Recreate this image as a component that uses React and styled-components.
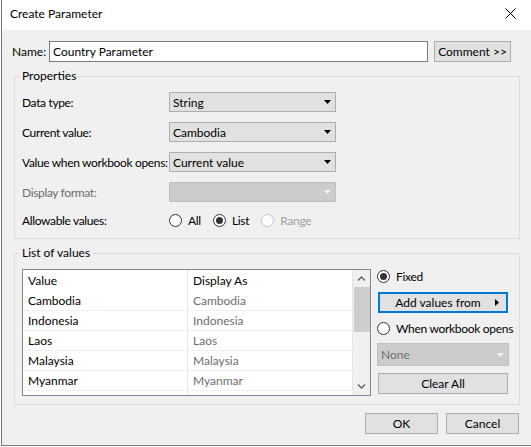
import React from "react";
import styled, { createGlobalStyle } from "styled-components";

const Global = createGlobalStyle`
  html, body {
    margin: 0;
    padding: 0;
    background: #ffffff;
    overflow: hidden;
  }
  body {
    font-family: "Segoe UI", Lato, "Liberation Sans", Arial, sans-serif;
    font-size: 12px;
    color: #000000;
    white-space: nowrap;
  }
`;

const Window = styled.div`
  margin-left: 1px;
  width: 530px;
  height: 446px;
  box-sizing: border-box;
  border-left: 1px solid #7a7a7a;
  border-bottom: 1px solid #7a7a7a;
  display: flex;
  flex-direction: column;
  overflow: hidden;
`;

const TitleBar = styled.div`
  height: 30px;
  flex: none;
  background: #ffffff;
  display: flex;
  align-items: center;
  justify-content: space-between;
  padding: 0 15px 3px 8px;
  box-sizing: border-box;
`;

const Body = styled.div`
  flex: 1;
  background: #f0f0f0;
  padding: 11px 0 0 10px;
  display: flex;
  flex-direction: column;
`;

const NameRow = styled.div`
  display: flex;
  align-items: center;
  height: 21px;
`;

const NameLabel = styled.span`
  width: 37px;
`;

const TextInput = styled.div`
  width: 379px;
  height: 21px;
  box-sizing: border-box;
  border: 1px solid #7a7a7a;
  background: #ffffff;
  display: flex;
  align-items: center;
  padding-left: 3px;
`;

const Button = styled.div`
  width: ${p => p.$w || 73}px;
  height: 21px;
  flex: none;
  box-sizing: border-box;
  border: ${p => (p.$focus ? "2px solid #0078d7" : "1px solid #adadad")};
  background: #e1e1e1;
  display: flex;
  align-items: center;
  justify-content: center;
  position: relative;
  margin-left: ${p => p.$ml || 0}px;
`;

const ButtonArrow = styled.svg`
  position: absolute;
  right: 7px;
  top: 5px;
`;

const Group = styled.section`
  margin: 14px 0 0 2px;
  width: 506px;
  box-sizing: border-box;
  border: 1px solid #dcdcdc;
  padding: 0 7px ${p => p.$pb}px 7px;
`;

const Caption = styled.div`
  margin: -8px 0 9px -2px;
  padding: 0 2px;
  width: fit-content;
  line-height: 14px;
  background: #f0f0f0;
`;

const FormRows = styled.div`
  display: flex;
  flex-direction: column;
  gap: 10px;
`;

const FormRow = styled.div`
  display: flex;
  align-items: center;
  height: ${p => p.$h || 20}px;
`;

const FieldLabel = styled.span`
  width: 147px;
  flex: none;
  letter-spacing: -0.35px;
  color: ${p => (p.$disabled ? "#6d6d6d" : "#000000")};
`;

const Select = styled.div`
  width: ${p => p.$w || 167}px;
  height: ${p => p.$h || 20}px;
  flex: none;
  box-sizing: border-box;
  border: 1px solid ${p => (p.$disabled ? "#bfbfbf" : "#adadad")};
  background: ${p => (p.$disabled ? "#cccccc" : "#e1e1e1")};
  color: ${p => (p.$disabled ? "#6d6d6d" : "#000000")};
  display: flex;
  align-items: center;
  justify-content: space-between;
  padding: 0 4px 0 3px;
`;

const RadioGroup = styled.div`
  display: flex;
  align-items: center;
  gap: 12px;
`;

const RadioItem = styled.label`
  display: flex;
  align-items: center;
  gap: 6px;
  letter-spacing: -0.3px;
  color: ${p => (p.$disabled ? "#a0a0a0" : "#000000")};
`;

const RadioDot = styled.span`
  width: 13px;
  height: 13px;
  flex: none;
  box-sizing: border-box;
  border-radius: 50%;
  border: 1px solid ${p => (p.$disabled ? "#c4c4c4" : "#333333")};
  background: #ffffff;
  display: inline-flex;
  align-items: center;
  justify-content: center;
  &::after {
    content: "";
    width: 7px;
    height: 7px;
    border-radius: 50%;
    background: #333333;
    display: ${p => (p.$checked ? "block" : "none")};
  }
`;

const ListArea = styled.div`
  display: flex;
  gap: 6px;
`;

const ValueTable = styled.div`
  width: 349px;
  height: 127px;
  flex: none;
  box-sizing: border-box;
  border: 1px solid #828790;
  background: #ffffff;
  display: flex;
  overflow: hidden;
`;

const Rows = styled.div`
  width: 330px;
  display: flex;
  flex-direction: column;
  background: linear-gradient(to right, transparent 164px, #e5e5e5 164px, #e5e5e5 165px, transparent 165px, transparent 329px, #e5e5e5 329px);
`;

const TableRow = styled.div`
  display: grid;
  grid-template-columns: 165px 165px;
  flex: none;
  height: ${p => (p.$header ? 21 : 20)}px;
  box-sizing: border-box;
  border-bottom: ${p => (p.$header ? "none" : "1px solid #f0f0f0")};
`;

const Cell = styled.div`
  display: flex;
  align-items: center;
  padding-left: 5px;
  color: ${p => (p.$muted ? "#6d6d6d" : "#000000")};
`;

const Scrollbar = styled.div`
  width: 17px;
  background: #f0f0f0;
  display: flex;
  flex-direction: column;
`;

const ScrollArrow = styled.div`
  height: 17px;
  display: flex;
  align-items: center;
  justify-content: center;
`;

const Thumb = styled.div`
  height: 45px;
  margin-left: 1px;
  background: #cdcdcd;
`;

const Track = styled.div`
  flex: 1;
`;

const SidePanel = styled.div`
  width: 132px;
  display: flex;
  flex-direction: column;
`;

const SideItem = styled.div`
  margin-top: ${p => p.$mt}px;
  margin-left: ${p => p.$ml || 0}px;
`;

const Footer = styled.div`
  width: 507px;
  margin-top: 8px;
  display: flex;
  justify-content: flex-end;
  gap: 8px;
`;

const DownArrow = ({ color = "#000" }) => (
  <svg width="7" height="4" viewBox="0 0 7 4">
    <polygon points="0,0 7,0 3.5,4" fill={color} />
  </svg>
);

const Chevron = ({ up }) => (
  <svg width="9" height="5" viewBox="0 0 9 5">
    <polyline
      points={up ? "1,4.5 4.5,1 8,4.5" : "1,0.5 4.5,4 8,0.5"}
      fill="none"
      stroke="#606060"
      strokeWidth="1.4"
    />
  </svg>
);

const Radio = ({ checked, disabled, children }) => (
  <RadioItem $disabled={disabled}>
    <RadioDot $checked={checked} $disabled={disabled} />
    {children}
  </RadioItem>
);

const countries = ["Cambodia", "Indonesia", "Laos", "Malaysia", "Myanmar"];

export default function App() {
  return (
    <>
      <Global />
      <Window>
        <TitleBar>
          <span>Create Parameter</span>
          <svg width="11" height="11" viewBox="0 0 11 11">
            <path d="M0.5 0.5 L10.5 10.5 M10.5 0.5 L0.5 10.5" stroke="#000" strokeWidth="1" />
          </svg>
        </TitleBar>
        <Body>
          <NameRow>
            <NameLabel>Name:</NameLabel>
            <TextInput>Country Parameter</TextInput>
            <Button $w={77} $ml={6}>Comment &gt;&gt;</Button>
          </NameRow>

          <Group $pb={10}>
            <Caption>Properties</Caption>
            <FormRows>
              <FormRow>
                <FieldLabel>Data type:</FieldLabel>
                <Select>String<DownArrow /></Select>
              </FormRow>
              <FormRow>
                <FieldLabel>Current value:</FieldLabel>
                <Select>Cambodia<DownArrow /></Select>
              </FormRow>
              <FormRow>
                <FieldLabel>Value when workbook opens:</FieldLabel>
                <Select>Current value<DownArrow /></Select>
              </FormRow>
              <FormRow>
                <FieldLabel $disabled>Display format:</FieldLabel>
                <Select $disabled><span /><DownArrow color="#f4f4f4" /></Select>
              </FormRow>
              <FormRow $h={16}>
                <FieldLabel>Allowable values:</FieldLabel>
                <RadioGroup>
                  <Radio>All</Radio>
                  <Radio checked>List</Radio>
                  <Radio disabled>Range</Radio>
                </RadioGroup>
              </FormRow>
            </FormRows>
          </Group>

          <Group $pb={8}>
            <Caption>List of values</Caption>
            <ListArea>
              <ValueTable>
                <Rows>
                  <TableRow $header>
                    <Cell>Value</Cell>
                    <Cell>Display As</Cell>
                  </TableRow>
                  {countries.map(c => (
                    <TableRow key={c}>
                      <Cell>{c}</Cell>
                      <Cell $muted>{c}</Cell>
                    </TableRow>
                  ))}
                  <TableRow>
                    <Cell />
                    <Cell />
                  </TableRow>
                </Rows>
                <Scrollbar>
                  <ScrollArrow><Chevron up /></ScrollArrow>
                  <Thumb />
                  <Track />
                  <ScrollArrow><Chevron /></ScrollArrow>
                </Scrollbar>
              </ValueTable>
              <SidePanel>
                <SideItem $mt={0}>
                  <Radio checked>Fixed</Radio>
                </SideItem>
                <SideItem $mt={8} $ml={1}>
                  <Button $w={130} $focus>
                    <span style={{ marginRight: 10 }}>Add values from</span>
                    <ButtonArrow width="4" height="7" viewBox="0 0 4 7">
                      <polygon points="0,0 4,3.5 0,7" fill="#000" />
                    </ButtonArrow>
                  </Button>
                </SideItem>
                <SideItem $mt={8}>
                  <Radio>When workbook opens</Radio>
                </SideItem>
                <SideItem $mt={7}>
                  <Select $w={132} $h={23} $disabled>None<DownArrow color="#f4f4f4" /></Select>
                </SideItem>
                <SideItem $mt={7} $ml={1}>
                  <Button $w={130}>Clear All</Button>
                </SideItem>
              </SidePanel>
            </ListArea>
          </Group>

          <Footer>
            <Button>OK</Button>
            <Button>Cancel</Button>
          </Footer>
        </Body>
      </Window>
    </>
  );
}
